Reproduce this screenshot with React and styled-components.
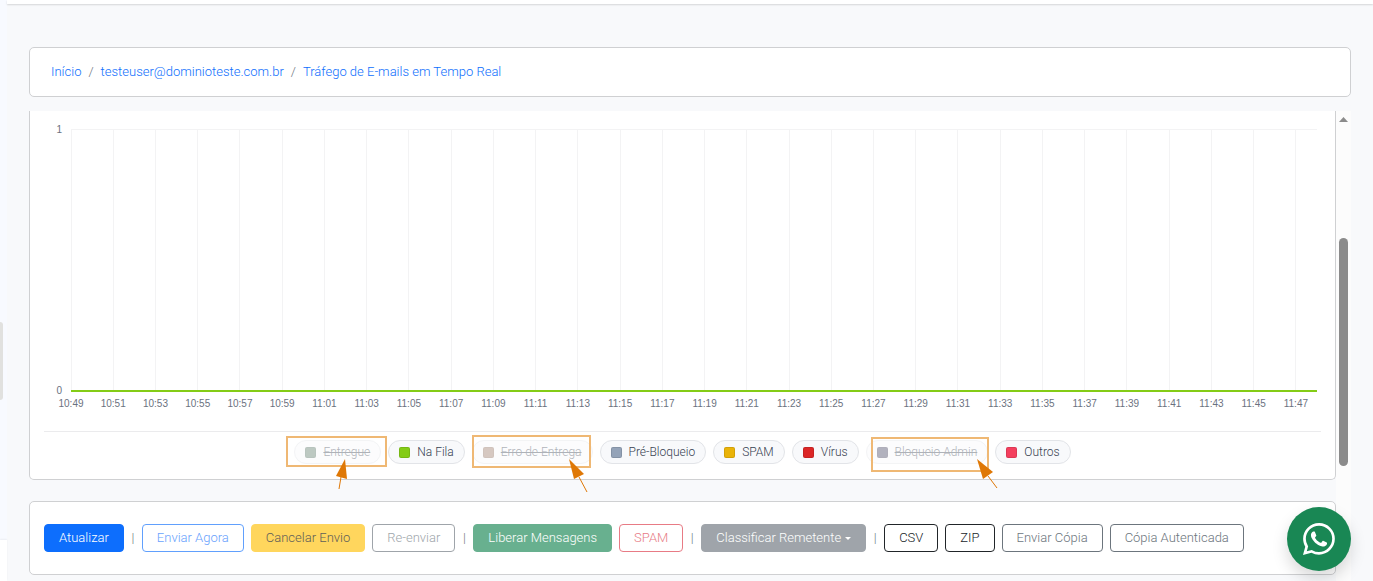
import { useState } from "react";
import styled, { createGlobalStyle } from "styled-components";
import { BsWhatsapp } from "react-icons/bs";

const GlobalStyle = createGlobalStyle`
    * {
        box-sizing: border-box;
    }

    body {
        margin: 0;
        background: #f8f9fb;
        color: #212529;
        font-family: Roboto, "Liberation Sans", sans-serif;
        font-size: 13px;
        font-weight: 300;
        line-height: 20px;
    }
`;

const Page = styled.div`
    display: flex;
    min-height: 100vh;
`;

const Rail = styled.aside`
    display: flex;
    flex-direction: column;
    width: 7px;
    background: #f8faff;
`;

const RailThumb = styled.div`
    width: 3px;
    height: 78px;
    margin-top: 322px;
    border-radius: 0 3px 3px 0;
    background: #e1e1df;
`;

const RailFooter = styled.div`
    flex: 1;
    margin-top: 140px;
    background: #fff;
    box-shadow: 0 -1px 2px rgba(0, 0, 0, 0.05);
`;

const Main = styled.main`
    display: flex;
    flex-direction: column;
    flex: 1;
    min-width: 0;
`;

const TopBar = styled.header`
    height: 4px;
    background: #fff;
    box-shadow: 0 1px 2px rgba(0, 0, 0, 0.14);
`;

const Content = styled.div`
    display: flex;
    flex-direction: column;
    flex: 1;
    gap: 14px;
    padding: 43px 22px 0;
`;

const Card = styled.section`
    border: 1px solid #cfd0d2;
    border-radius: 5px;
    background: #fff;
`;

const Breadcrumb = styled(Card).attrs({ as: "nav" })`
    display: flex;
    gap: 7px;
    padding: 14px 21px;
    color: #6c757d;
`;

const Crumb = styled.a`
    color: #0d6efd;
    text-decoration: none;
`;

const ScrollArea = styled.div`
    display: flex;
    flex: 1;
`;

const Panels = styled.div`
    display: flex;
    flex-direction: column;
    flex: 1;
    gap: 21px;
    min-width: 0;
    padding-bottom: 6px;
`;

const ScrollTrack = styled.div`
    display: flex;
    flex-direction: column;
    align-items: center;
    width: 15px;
    padding-top: 6px;
    background: #fcfcfc;
`;

const ScrollThumb = styled.div`
    width: 9px;
    height: 228px;
    margin-top: 116px;
    border-radius: 5px;
    background: #8b8b8b;
`;

const ChartCard = styled(Card)`
    padding: 18px 14px 15px;
    border-top: none;
    border-radius: 0 0 5px 5px;
`;

const Plot = styled.div`
    padding: 0 4px 0 27px;
`;

const PlotSvg = styled.svg`
    display: block;
    width: 100%;
    height: 302px;
    overflow: visible;
`;

const AxisText = styled.text`
    fill: #6b7280;
    font-family: "Liberation Sans", Arial, sans-serif;
    font-size: 10px;
    font-weight: 400;
`;

const Legend = styled.div`
    display: flex;
    flex-wrap: wrap;
    justify-content: center;
    gap: 7px;
    padding-top: 8px;
    border-top: 1px solid #ebebed;
`;

const LegendItem = styled.div`
    position: relative;
`;

const Chip = styled.button`
    display: flex;
    align-items: center;
    gap: 7px;
    height: 24px;
    padding: 0 10px;
    border: 1px solid #e2e4e8;
    border-radius: 12px;
    background: #f8f9fb;
    color: #374151;
    font-family: Roboto, "Liberation Sans", sans-serif;
    font-size: 12px;
    font-weight: 300;
    line-height: 16px;
    text-decoration: ${(props) => (props.$off ? "line-through" : "none")};
    opacity: ${(props) => (props.$off ? 0.4 : 1)};
    cursor: pointer;
`;

const Swatch = styled.span`
    width: 11px;
    height: 11px;
    border: 1px solid rgba(0, 0, 0, 0.1);
    border-radius: 2px;
    background: ${(props) => props.$color};
`;

const Mark = styled.svg`
    position: absolute;
    top: 0;
    left: 0;
    width: 1px;
    height: 1px;
    overflow: visible;
    pointer-events: none;
`;

const Toolbar = styled(Card)`
    display: flex;
    flex-wrap: wrap;
    align-items: center;
    gap: 7px;
    padding: 22px 14px;
`;

const Button = styled.button`
    display: flex;
    align-items: center;
    gap: 4px;
    height: 28px;
    padding: 0 14px;
    border: 1px solid ${(props) => props.$border || props.$color};
    border-radius: 4px;
    background: ${(props) => props.$bg || "transparent"};
    color: ${(props) => props.$color};
    font-family: inherit;
    font-size: 13px;
    font-weight: 300;
    line-height: 20px;
    white-space: nowrap;
    opacity: ${(props) => (props.disabled ? 0.65 : 1)};
`;

const Separator = styled.span`
    width: 4px;
    color: #6c757d;
    text-align: center;
`;

const Caret = styled.span`
    border-top: 3px solid currentColor;
    border-right: 3px solid transparent;
    border-left: 3px solid transparent;
`;

const WhatsappLink = styled.a`
    position: fixed;
    right: 22px;
    bottom: 10px;
    display: flex;
    align-items: center;
    justify-content: center;
    width: 64px;
    height: 64px;
    border-radius: 50%;
    background: #198754;
    color: #fff;
    box-shadow: 0 8px 16px rgba(0, 0, 0, 0.15);
`;

const series = [
    {
        name: "Entregue",
        color: "#5b7a69",
        off: true,
        mark: { x: -7, y: -3, w: 99, h: 29, head: "51,19 42,36 53,39", tail: "47,37 45,49" },
    },
    { name: "Na Fila", color: "#84cc16" },
    {
        name: "Erro de Entrega",
        color: "#9b7765",
        off: true,
        mark: { x: 1, y: -4, w: 117, h: 31, head: "97,19 112,34 102,39", tail: "107,37 115,52" },
    },
    { name: "Pré-Bloqueio", color: "#94a3b8" },
    { name: "SPAM", color: "#eab308" },
    { name: "Vírus", color: "#dc2626" },
    {
        name: "Bloqueio Admin",
        color: "#42405e",
        off: true,
        mark: { x: 6, y: -2, w: 116, h: 33, head: "111,19 127,32 117,39", tail: "122,36 131,48" },
    },
    { name: "Outros", color: "#f43f5e" },
];

const START = 10 * 60 + 49;
const MINUTES = 59;
const PLOT_HEIGHT = 261;

const ticks = Array.from({ length: 30 }, (_, i) => {
    const time = START + i * 2;
    return {
        label: `${Math.floor(time / 60)}:${String(time % 60).padStart(2, "0")}`,
        x: `${((i * 2) / MINUTES) * 100}%`,
    };
});

function TrafficChart() {
    return (
        <Plot>
            <PlotSvg role="img" aria-label="Tráfego de E-mails em Tempo Real">
                <g stroke="#f3f3f4" shapeRendering="crispEdges">
                    <line x1="0" x2="100%" y1="0" y2="0" />
                    {ticks.map((tick) => (
                        <line key={tick.label} x1={tick.x} x2={tick.x} y1="0" y2={PLOT_HEIGHT} />
                    ))}
                </g>
                <line
                    x1="0"
                    x2="100%"
                    y1={PLOT_HEIGHT + 1}
                    y2={PLOT_HEIGHT + 1}
                    stroke="#84cc16"
                    strokeWidth="2"
                />
                <AxisText x="-9" y="4" textAnchor="end">
                    1
                </AxisText>
                <AxisText x="-9" y={PLOT_HEIGHT + 4} textAnchor="end">
                    0
                </AxisText>
                {ticks.map((tick) => (
                    <AxisText key={tick.label} x={tick.x} y={PLOT_HEIGHT + 17} textAnchor="middle">
                        {tick.label}
                    </AxisText>
                ))}
            </PlotSvg>
        </Plot>
    );
}

function Callout({ mark }) {
    return (
        <Mark aria-hidden="true">
            <rect
                x={mark.x}
                y={mark.y}
                width={mark.w}
                height={mark.h}
                fill="none"
                stroke="#efb874"
                strokeWidth="2"
            />
            <polyline points={mark.tail} fill="none" stroke="#df7806" />
            <polygon points={mark.head} fill="#df7806" />
        </Mark>
    );
}

function App() {
    const [hidden, setHidden] = useState(series.filter((s) => s.off).map((s) => s.name));

    const toggle = (name) =>
        setHidden((prev) =>
            prev.includes(name) ? prev.filter((n) => n !== name) : [...prev, name]
        );

    return (
        <>
            <GlobalStyle />
            <Page>
                <Rail>
                    <RailThumb />
                    <RailFooter />
                </Rail>
                <Main>
                    <TopBar />
                    <Content>
                        <Breadcrumb>
                            <Crumb href="#inicio">Início</Crumb>
                            <span>/</span>
                            <Crumb href="#conta">testeuser@dominioteste.com.br</Crumb>
                            <span>/</span>
                            <Crumb href="#trafego">Tráfego de E-mails em Tempo Real</Crumb>
                        </Breadcrumb>
                        <ScrollArea>
                            <Panels>
                                <ChartCard>
                                    <TrafficChart />
                                    <Legend>
                                        {series.map((s) => (
                                            <LegendItem key={s.name}>
                                                <Chip
                                                    type="button"
                                                    aria-pressed={!hidden.includes(s.name)}
                                                    $off={hidden.includes(s.name)}
                                                    onClick={() => toggle(s.name)}
                                                >
                                                    <Swatch $color={s.color} />
                                                    <span>{s.name}</span>
                                                </Chip>
                                                {s.mark && <Callout mark={s.mark} />}
                                            </LegendItem>
                                        ))}
                                    </Legend>
                                </ChartCard>
                                <Toolbar>
                                    <Button $color="#fff" $bg="#0d6efd" $border="#0d6efd">
                                        Atualizar
                                    </Button>
                                    <Separator>|</Separator>
                                    <Button disabled $color="#0d6efd">
                                        Enviar Agora
                                    </Button>
                                    <Button disabled $color="#000" $bg="#ffc107" $border="#ffc107">
                                        Cancelar Envio
                                    </Button>
                                    <Button disabled $color="#6c757d">
                                        Re-enviar
                                    </Button>
                                    <Separator>|</Separator>
                                    <Button disabled $color="#fff" $bg="#198754" $border="#198754">
                                        Liberar Mensagens
                                    </Button>
                                    <Button disabled $color="#dc3545">
                                        SPAM
                                    </Button>
                                    <Separator>|</Separator>
                                    <Button disabled $color="#fff" $bg="#6c757d" $border="#6c757d">
                                        Classificar Remetente
                                        <Caret />
                                    </Button>
                                    <Separator>|</Separator>
                                    <Button $color="#212529">CSV</Button>
                                    <Button $color="#212529">ZIP</Button>
                                    <Button $color="#6c757d">Enviar Cópia</Button>
                                    <Button $color="#6c757d">Cópia Autenticada</Button>
                                </Toolbar>
                            </Panels>
                            <ScrollTrack>
                                <svg width="9" height="5" viewBox="0 0 9 5" aria-hidden="true">
                                    <path d="M0 5 4.5 0 9 5z" fill="#8b8b8b" />
                                </svg>
                                <ScrollThumb />
                            </ScrollTrack>
                        </ScrollArea>
                    </Content>
                </Main>
            </Page>
            <WhatsappLink href="#whatsapp" aria-label="WhatsApp">
                <BsWhatsapp size={32} />
            </WhatsappLink>
        </>
    );
}

export default App;
